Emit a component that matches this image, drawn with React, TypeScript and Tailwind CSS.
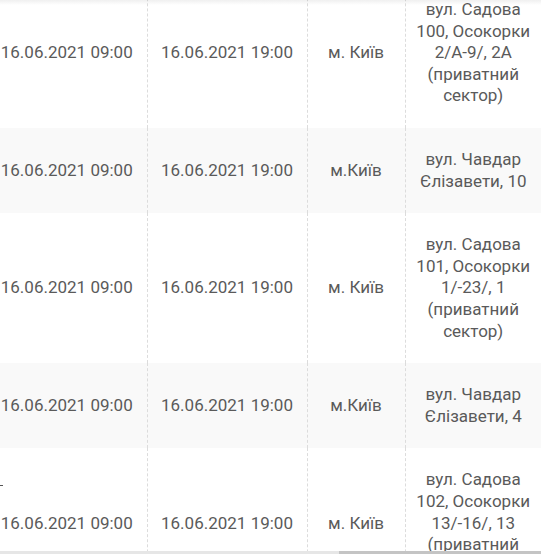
import React from "react";

interface Row {
  start: string;
  end: string;
  city: string;
  address: string[];
}

const rows: Row[] = [
  {
    start: "16.06.2021 09:00",
    end: "16.06.2021 19:00",
    city: "м. Київ",
    address: ["вул. Садова", "100, Осокорки", "2/А-9/, 2А", "(приватний", "сектор)"],
  },
  {
    start: "16.06.2021 09:00",
    end: "16.06.2021 19:00",
    city: "м.Київ",
    address: ["вул. Чавдар", "Єлізавети, 10"],
  },
  {
    start: "16.06.2021 09:00",
    end: "16.06.2021 19:00",
    city: "м. Київ",
    address: ["вул. Садова", "101, Осокорки", "1/-23/, 1", "(приватний", "сектор)"],
  },
  {
    start: "16.06.2021 09:00",
    end: "16.06.2021 19:00",
    city: "м.Київ",
    address: ["вул. Чавдар", "Єлізавети, 4"],
  },
  {
    start: "16.06.2021 09:00",
    end: "16.06.2021 19:00",
    city: "м. Київ",
    address: ["вул. Садова", "102, Осокорки", "13/-16/, 13", "(приватний", "сектор)"],
  },
];

const cell = "py-[21px] px-[4px] text-center align-middle";
const divider = "border-r border-dashed border-[#dcdcdc]";

export default function App() {
  return (
    <div
      className="relative h-[554px] w-[541px] overflow-hidden bg-white text-[17px] leading-[21.6px] text-[#5a5a5a]"
      style={{ fontFamily: "Roboto, 'Noto Sans', sans-serif" }}
    >
      <table className="ml-[-13px] mt-[-22px] table-fixed border-collapse">
        <colgroup>
          <col className="w-[160px]" />
          <col className="w-[160px]" />
          <col className="w-[98px]" />
          <col className="w-[136px]" />
        </colgroup>
        <tbody>
          {rows.map((row, i) => (
            <tr key={i} className={i % 2 === 1 ? "bg-[#f9f9f9]" : "bg-white"}>
              <td className={`${cell} ${divider} whitespace-nowrap`}>{row.start}</td>
              <td className={`${cell} ${divider} whitespace-nowrap`}>{row.end}</td>
              <td className={`${cell} ${divider} whitespace-nowrap`}>{row.city}</td>
              <td className={cell}>
                {row.address.map((line, j) => (
                  <div key={j} className="whitespace-nowrap">
                    {line}
                  </div>
                ))}
              </td>
            </tr>
          ))}
        </tbody>
      </table>

      {/* shadow from the header above */}
      <div className="pointer-events-none absolute left-0 right-0 top-0 h-[5px] bg-gradient-to-b from-black/[0.06] to-transparent" />

      {/* small marker on the left edge */}
      <div className="absolute left-0 top-[485px] h-px w-[3px] bg-[#555]" />

      {/* horizontal scrollbar */}
      <div className="absolute bottom-0 left-0 right-0 h-[3px] bg-[#e6e6e6]">
        <div className="ml-[339px] h-full bg-[#c4c4c4]" />
      </div>
    </div>
  );
}
